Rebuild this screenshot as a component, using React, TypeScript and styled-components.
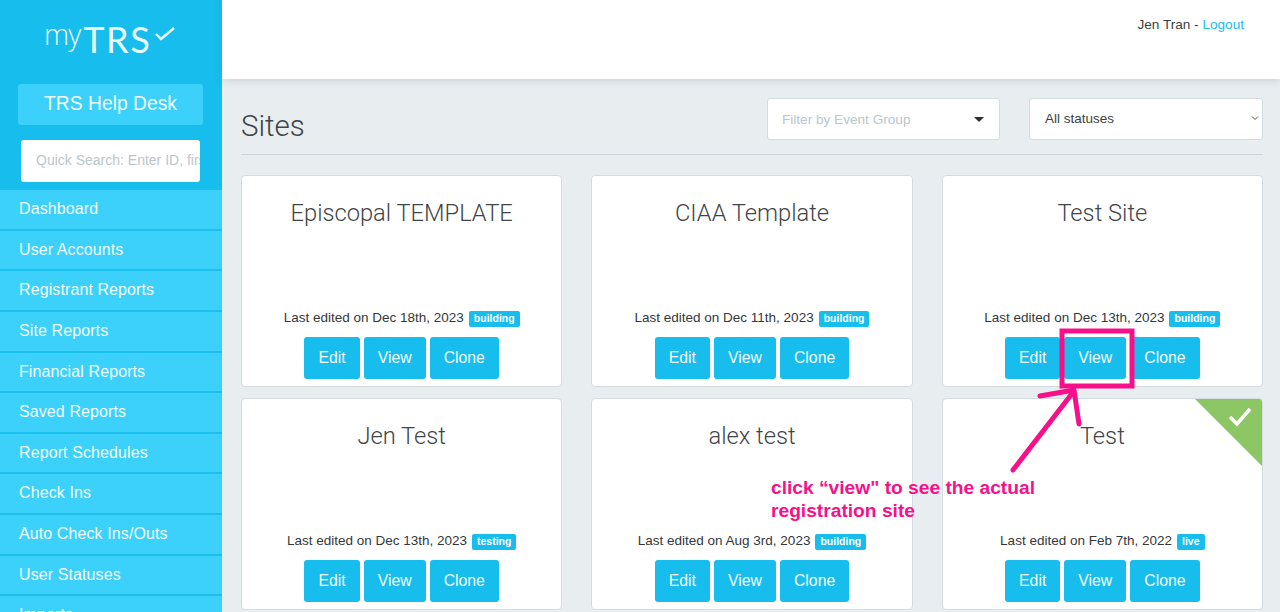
import React from 'react';
import styled, { createGlobalStyle } from 'styled-components';

const GlobalStyle = createGlobalStyle`
  html, body {
    margin: 0;
    height: 100%;
    overflow: hidden;
    background: #e8edef;
    font-family: "Liberation Sans", Arial, sans-serif;
  }
  * {
    box-sizing: border-box;
  }
`;

const Page = styled.div`
  position: relative;
  width: 1280px;
  height: 612px;
  display: flex;
  overflow: hidden;
`;

const Sidebar = styled.aside`
  width: 222px;
  height: 612px;
  flex-shrink: 0;
  background-color: #17bdec;
  display: flex;
  flex-direction: column;
  overflow: hidden;
  & > * {
    flex-shrink: 0;
  }
`;

const Logo = styled.div`
  height: 84px;
  padding: 16px 0 0 44px;
  display: flex;
  align-items: flex-start;
  color: #e9f9fe;
  font-family: "Open Sans", sans-serif;
  font-weight: 300;
`;

const LogoMy = styled.span`
  font-size: 28.5px;
  line-height: 36px;
  letter-spacing: -1px;
`;

const LogoTrs = styled.span`
  font-family: Lato, sans-serif;
  font-size: 36px;
  line-height: 46px;
  margin-left: 3px;
  font-weight: 400;
  letter-spacing: 1.6px;
`;

const LogoCheck = styled.svg`
  width: 20px;
  height: 15px;
  margin: 10px 0 0 4px;
`;

const HelpButton = styled.div`
  width: 185px;
  height: 41px;
  margin-left: 18px;
  border-radius: 3px;
  background-color: #3bd1fb;
  color: #f2fcff;
  font-size: 19.3px;
  line-height: 39px;
  text-align: center;
`;

const SearchBox = styled.input`
  width: 179px;
  height: 42px;
  margin: 15px 0 8px 21px;
  padding: 0 0 2px 15px;
  border: none;
  border-radius: 3px;
  background-color: #ffffff;
  font-family: inherit;
  font-size: 14px;
  &::placeholder {
    color: #bcc6cc;
    opacity: 1;
  }
`;

const NavList = styled.nav`
  display: flex;
  flex-direction: column;
`;

const NavItem = styled.div`
  height: 40.65px;
  flex-shrink: 0;
  padding-left: 19px;
  background-color: #3bd1fb;
  border-bottom: 2px solid #1dbfec;
  color: #f2fcff;
  font-size: 16px;
  letter-spacing: 0.1px;
  line-height: 37px;
`;

const Main = styled.main`
  flex: 1;
  min-width: 0;
  display: flex;
  flex-direction: column;
`;

const Header = styled.header`
  height: 79px;
  flex-shrink: 0;
  padding: 16px 36px 0 0;
  background-color: #ffffff;
  box-shadow: 0 1px 8px rgba(90, 120, 130, 0.25);
  color: #3a3f44;
  font-size: 13.6px;
  line-height: 18px;
  text-align: right;
`;

const LogoutLink = styled.a`
  color: #17bdec;
`;

const Content = styled.div`
  padding: 19px 17px 0 19px;
`;

const Toolbar = styled.div`
  height: 57px;
  display: flex;
  align-items: flex-start;
  border-bottom: 1px solid #ccd6da;
`;

const Title = styled.h1`
  margin: 10px auto 0 0;
  color: #3f4549;
  font-family: Roboto, sans-serif;
  font-size: 29.5px;
  font-weight: 300;
  line-height: 36px;
`;

const FilterBase = styled.div`
  height: 42px;
  display: flex;
  align-items: center;
  justify-content: space-between;
  background-color: #ffffff;
  border: 1px solid #d3dce0;
  border-radius: 3px;
`;

const EventFilter = styled(FilterBase)`
  width: 233px;
  padding: 0 15px 0 14px;
  color: #bcc6cc;
  font-size: 13.6px;
`;

const StatusFilter = styled(FilterBase)`
  width: 234px;
  margin-left: 29px;
  padding: 0 3px 2px 15px;
  color: #3a3f44;
  font-size: 13.5px;
`;

const Caret = styled.span`
  width: 0;
  height: 0;
  border-left: 5px solid transparent;
  border-right: 5px solid transparent;
  border-top: 5px solid #2c2f33;
`;

const CardGrid = styled.div`
  margin-top: 20px;
  display: grid;
  grid-template-columns: repeat(3, 1fr);
  grid-auto-rows: 212px;
  column-gap: 29px;
  row-gap: 11px;
`;

const Card = styled.div`
  position: relative;
  display: flex;
  flex-direction: column;
  align-items: center;
  padding: 22px 0 7px;
  background-color: #ffffff;
  border: 1px solid #d3dce0;
  border-radius: 4px;
  overflow: hidden;
`;

const CardTitle = styled.h2`
  margin: 0 0 auto;
  color: #3f4549;
  font-family: Roboto, sans-serif;
  font-size: 23.7px;
  font-weight: 300;
  line-height: 30px;
`;

const Meta = styled.div`
  display: flex;
  align-items: center;
  gap: 5px;
  height: 18px;
  margin-bottom: 11px;
  color: #33383d;
  font-size: 13.5px;
`;

const Badge = styled.span`
  padding: 0 5px;
  height: 16px;
  margin-top: 3px;
  border-radius: 2px;
  background-color: #17bdec;
  color: #ffffff;
  font-size: 10.5px;
  font-weight: 700;
  line-height: 15px;
`;

const Actions = styled.div`
  display: flex;
  gap: 4px;
`;

const ActionButton = styled.div`
  height: 42px;
  padding: 0 14px;
  border-radius: 3px;
  background-color: #17bdec;
  color: #f2fcff;
  font-size: 15.8px;
  line-height: 41px;
`;

const LiveCorner = styled.svg`
  position: absolute;
  top: -1px;
  right: -1px;
  width: 69px;
  height: 69px;
`;

const Annotation = styled.svg`
  position: absolute;
  top: 0;
  left: 0;
  width: 1280px;
  height: 612px;
  pointer-events: none;
`;

const AnnotationText = styled.div`
  position: absolute;
  top: 477px;
  left: 771px;
  color: #f7108a;
  font-size: 19.2px;
  font-weight: 700;
  line-height: 22.5px;
`;

const navItems = [
  'Dashboard',
  'User Accounts',
  'Registrant Reports',
  'Site Reports',
  'Financial Reports',
  'Saved Reports',
  'Report Schedules',
  'Check Ins',
  'Auto Check Ins/Outs',
  'User Statuses',
  'Imports',
];

const sites = [
  { title: 'Episcopal TEMPLATE', date: 'Dec 18th, 2023', status: 'building' },
  { title: 'CIAA Template', date: 'Dec 11th, 2023', status: 'building' },
  { title: 'Test Site', date: 'Dec 13th, 2023', status: 'building' },
  { title: 'Jen Test', date: 'Dec 13th, 2023', status: 'testing' },
  { title: 'alex test', date: 'Aug 3rd, 2023', status: 'building' },
  { title: 'Test', date: 'Feb 7th, 2022', status: 'live' },
];

function App() {
  return (
    <Page>
      <GlobalStyle />
      <Sidebar>
        <Logo>
          <LogoMy>my</LogoMy>
          <LogoTrs>TRS</LogoTrs>
          <LogoCheck viewBox="0 0 20 15">
            <path d="M1 8l5 5L19 2" fill="none" stroke="#e9f9fe" strokeWidth="2.4" />
          </LogoCheck>
        </Logo>
        <HelpButton>TRS Help Desk</HelpButton>
        <SearchBox placeholder="Quick Search: Enter ID, first name" />
        <NavList>
          {navItems.map((item) => (
            <NavItem key={item}>{item}</NavItem>
          ))}
        </NavList>
      </Sidebar>
      <Main>
        <Header>
          Jen Tran - <LogoutLink>Logout</LogoutLink>
        </Header>
        <Content>
          <Toolbar>
            <Title>Sites</Title>
            <EventFilter>
              Filter by Event Group
              <Caret />
            </EventFilter>
            <StatusFilter>
              All statuses
              <svg width="8" height="6" viewBox="0 0 8 6">
                <path d="M1 1.5l3 3 3-3" fill="none" stroke="#555" strokeWidth="1" />
              </svg>
            </StatusFilter>
          </Toolbar>
          <CardGrid>
            {sites.map((site) => (
              <Card key={site.title}>
                {site.status === 'live' && (
                  <LiveCorner viewBox="0 0 69 69">
                    <path d="M0 0H69V69Z" fill="#8cc665" />
                    <path d="M36 19l7 7L56 11" fill="none" stroke="#ffffff" strokeWidth="3.5" />
                  </LiveCorner>
                )}
                <CardTitle>{site.title}</CardTitle>
                <Meta>
                  Last edited on {site.date}
                  <Badge>{site.status}</Badge>
                </Meta>
                <Actions>
                  <ActionButton>Edit</ActionButton>
                  <ActionButton>View</ActionButton>
                  <ActionButton>Clone</ActionButton>
                </Actions>
              </Card>
            ))}
          </CardGrid>
        </Content>
      </Main>
      <Annotation viewBox="0 0 1280 612">
        <rect x="1062" y="331" width="70" height="55" fill="none" stroke="#f7108a" strokeWidth="5" />
        <path
          d="M1013 470L1074 391M1040 396L1074 390L1079 424"
          fill="none"
          stroke="#f7108a"
          strokeWidth="5"
          strokeLinecap="round"
          strokeLinejoin="round"
        />
      </Annotation>
      <AnnotationText>
        click “view" to see the actual
        <br />
        registration site
      </AnnotationText>
    </Page>
  );
}

export default App;
